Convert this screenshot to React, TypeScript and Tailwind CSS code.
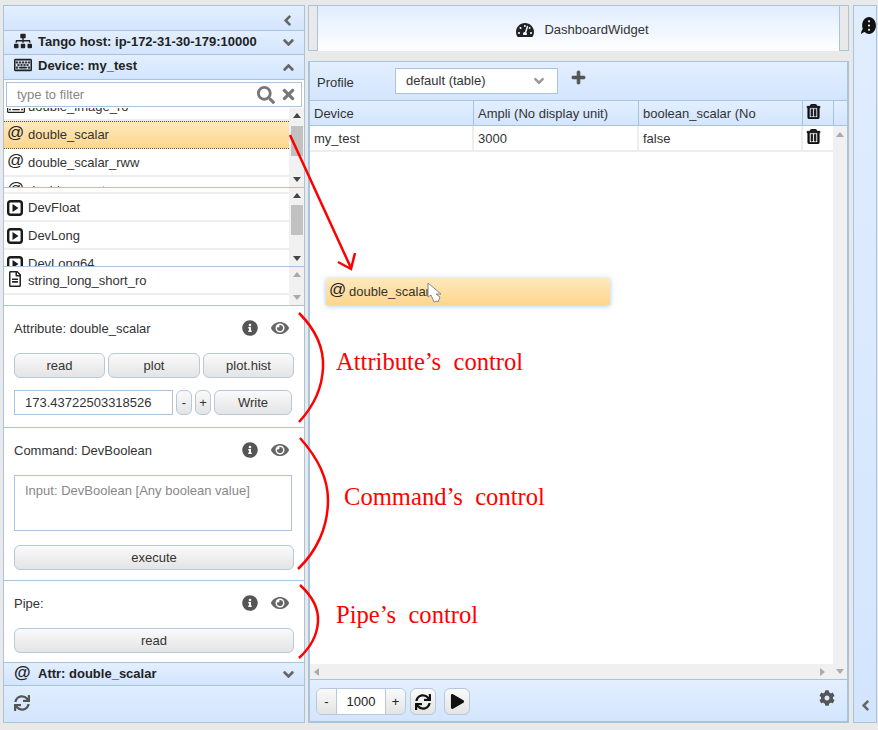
import React from "react";
import {
  FaSitemap, FaRegKeyboard, FaSearch, FaTimes, FaInfoCircle, FaEye, FaPlus, FaRegTrashAlt,
  FaSync, FaPlay, FaCog, FaTachometerAlt, FaAngleLeft, FaAngleDown, FaAngleUp,
  FaRegFileAlt, FaCommentDots,
} from "react-icons/fa";

const At = () => <span className="text-[17px] leading-none text-[#222] w-[21px] -mt-[5px] shrink-0">@</span>;

function Header({ icon, label, open, h }: { icon: React.ReactNode; label: string; open?: boolean; h: string }) {
  return (
    <div className={`flex items-center pl-[10px] pr-[7px] border-b border-[#a8c4dc] bg-gradient-to-b from-[#e3efff] to-[#d3e5fd] font-bold text-[13px] text-[#222] ${h}`}>
      <span className="w-[24px] shrink-0 flex items-center">{icon}</span>
      <span className="flex-1 -mt-[2px]">{label}</span>
      {open ? <FaAngleUp className="text-[#666] text-[17px]" /> : <FaAngleDown className="text-[#666] text-[17px]" />}
    </div>
  );
}

function Scroll({ thumbTop, thumbH, faded }: { thumbTop?: string; thumbH?: string; faded?: boolean }) {
  const c = faded ? "border-b-[#aaa] " : "border-b-[#444]";
  const d = faded ? "border-t-[#aaa]" : "border-t-[#444]";
  return (
    <div className="w-[15px] shrink-0 bg-[#f1f1f1] flex flex-col items-center justify-between relative py-[5px]">
      <div className={`w-0 h-0 border-x-[4px] border-x-transparent border-b-[5px] ${c}`} />
      {thumbH && <div className={`absolute left-[2px] right-[1px] bg-[#c1c1c1] ${thumbTop} ${thumbH}`} />}
      <div className={`w-0 h-0 border-x-[4px] border-x-transparent border-t-[5px] ${d}`} />
    </div>
  );
}

function Row({ icon, label, hl }: { icon: React.ReactNode; label: string; hl?: boolean }) {
  return (
    <div className={`h-[28px] shrink-0 flex items-center pl-[3px] text-[13px] text-[#333] ${hl ? "bg-gradient-to-b from-[#ffe9bd] to-[#fdd68d] border-y border-dotted border-y-[#555]" : "border-b-2 pt-[1px] border-[#eeeeee]"}`}>
      <span className="w-[21px] shrink-0 flex items-center">{icon}</span>
      <span>{label}</span>
    </div>
  );
}

function Btn({ children, className = "" }: { children: React.ReactNode; className?: string }) {
  return (
    <div className={`flex items-center justify-center h-[25px] rounded-[6px] border border-[#b4c9dc] bg-gradient-to-b from-[#fafafa] to-[#e4e4e4] text-[13px] text-[#333] ${className}`}>
      {children}
    </div>
  );
}

function Title({ label }: { label: string }) {
  return (
    <div className="flex items-center text-[13px] text-[#333] h-[20px]">
      <span className="flex-1">{label}</span>
      <FaInfoCircle className="text-[#555] text-[16px] mr-[13px] -mt-[3px]" />
      <FaEye className="text-[#666] text-[18px] mr-[6px] -mt-[3px]" />
    </div>
  );
}

const PlayIc = () => (
  <svg width="16" height="16" viewBox="0 0 16 16">
    <rect x="1.2" y="1.2" width="13.6" height="13.6" rx="2.5" fill="#fff" stroke="#1a1a1a" strokeWidth="2.4" />
    <path d="M5.5 4 L11.5 8 L5.5 12 Z" fill="#1a1a1a" />
  </svg>
);

const Trash = () => <FaRegTrashAlt className="text-[#111] text-[15px]" stroke="#111" strokeWidth={28} />;

export default function App() {
  return (
    <div className="relative w-[878px] h-[730px] bg-[#e9e9e9] overflow-hidden flex pt-[5px] pl-[3px] font-['Liberation_Sans',Arial,sans-serif]">
      {/* Left panel */}
      <div className="w-[302px] h-[718px] shrink-0 border border-[#a8c4dc] bg-white flex flex-col">
        <div className="h-[25px] shrink-0 border-b border-[#a8c4dc] bg-gradient-to-b from-[#e3efff] to-[#d3e5fd] flex items-center justify-end pr-[8px] pt-[5px]">
          <FaAngleLeft className="text-[#666] text-[17px]" />
        </div>
        <Header h="h-[24px] shrink-0" icon={<FaSitemap className="text-[#222] text-[18px] -mt-[4px]" />} label="Tango host: ip-172-31-30-179:10000" />
        <Header h="h-[25px] shrink-0" open icon={<FaRegKeyboard className="text-[#222] text-[18px] -mt-[4px]" stroke="#222" strokeWidth={16} />} label="Device: my_test" />

        <div className="h-[28px] shrink-0 px-[2px] pt-[2px] bg-white">
          <div className="h-[25px] border border-[#a8c4dc] flex items-center pl-[10px] pr-[4px] text-[13px] text-[#888]">
            <span className="flex-1">type to filter</span>
            <FaSearch className="text-[#777] text-[18px] mr-[5px]" />
            <FaTimes className="text-[#777] text-[17px]" />
          </div>
        </div>

        <div className="h-[80px] shrink-0 flex overflow-hidden border-b border-[#a8c4dc]">
          <div className="flex-1 flex flex-col -mt-[15px]">
            <Row icon={<FaRegKeyboard className="text-[18px] text-[#222]" />} label="double_image_ro" />
            <Row hl icon={<At />} label="double_scalar" />
            <Row icon={<At />} label="double_scalar_rww" />
            <Row icon={<At />} label="double_spectrum" />
          </div>
          <Scroll thumbTop="top-[18px]" thumbH="h-[30px]" />
        </div>

        <div className="h-[79px] shrink-0 flex overflow-hidden border-b border-[#a8c4dc]">
          <div className="flex-1 flex flex-col -mt-[22px]">
            <Row icon={<PlayIc />} label="DevDouble" />
            <Row icon={<PlayIc />} label="DevFloat" />
            <Row icon={<PlayIc />} label="DevLong" />
            <Row icon={<PlayIc />} label="DevLong64" />
          </div>
          <Scroll thumbTop="top-[17px]" thumbH="h-[30px]" />
        </div>

        <div className="h-[39px] shrink-0 flex overflow-hidden border-b border-[#a8c4dc]">
          <div className="flex-1 flex flex-col">
            <Row icon={<FaRegFileAlt className="text-[16px] text-[#222] -mt-[3px]" />} label="string_long_short_ro" />
          </div>
          <Scroll faded />
        </div>

        <div className="h-[122px] shrink-0 border-b border-[#a8c4dc] pl-[10px] pr-[9px] pt-[13px]">
          <Title label="Attribute: double_scalar" />
          <div className="flex gap-[3px] mt-[14px]">
            <Btn className="w-[91px]">read</Btn>
            <Btn className="w-[92px]">plot</Btn>
            <Btn className="w-[91px]">plot.hist</Btn>
          </div>
          <div className="flex mt-[12px]">
            <div className="w-[159px] h-[25px] border border-[#a8c4dc] flex items-center pl-[10px] text-[13px] text-[#333]">173.43722503318526</div>
            <Btn className="w-[16px] ml-[3px]">-</Btn>
            <Btn className="w-[16px] ml-[3px]">+</Btn>
            <Btn className="w-[78px] ml-[3px]">Write</Btn>
          </div>
        </div>

        <div className="h-[153px] shrink-0 border-b border-[#a8c4dc] pl-[10px] pr-[9px] pt-[13px]">
          <Title label="Command: DevBoolean" />
          <div className="w-[278px] h-[56px] mt-[14px] border border-[#a8c4dc] pl-[10px] pt-[5px] text-[13px] text-[#888]">Input: DevBoolean [Any boolean value]</div>
          <Btn className="mt-[14px] w-[280px]">execute</Btn>
        </div>

        <div className="h-[81px] shrink-0 pl-[10px] pr-[9px] pt-[13px]">
          <Title label="Pipe:" />
          <Btn className="mt-[14px] w-[280px]">read</Btn>
        </div>

        <Header h="h-[24px] shrink-0 border-t pt-[1px]" icon={<At />} label="Attr: double_scalar" />
        <div className="flex-1 bg-gradient-to-b from-[#e0edff] to-[#d3e5fd] pl-[10px] pt-[9px]">
          <FaSync className="text-[#555] text-[16px]" />
        </div>
      </div>

      {/* Center */}
      <div className="w-[541px] h-[718px] shrink-0 ml-[3px] flex flex-col border-b-2 border-[#a8c4dc]">
        <div className="h-[46px] shrink-0 flex">
          <div className="w-[10px] border border-[#a8c4dc] bg-[#e9e9e9]" />
          <div className="w-[521px] border-t border-[#a8c4dc] bg-gradient-to-b from-[#e0edff] to-white flex items-center justify-center gap-[10px] pl-[8px] pt-[2px] text-[13px] text-[#333]">
            <FaTachometerAlt className="text-[#222] text-[18px]" />
            <span>DashboardWidget</span>
          </div>
          <div className="flex-1 border border-[#a8c4dc] bg-[#e9e9e9]" />
        </div>
        <div className="flex-1 mt-[10px] border-x-2 border-t border-[#a8c4dc] flex flex-col min-h-0">
          <div className="h-[38px] shrink-0 flex bg-gradient-to-b from-[#e3efff] to-[#d3e5fd] pl-[7px] text-[13px] text-[#333]">
            <span className="w-[78px] pt-[11px]">Profile</span>
            <div className="w-[163px] h-[26px] mt-[6px] bg-white border border-[#a8c4dc] flex items-center pl-[10px] pr-[10px]">
              <span className="flex-1">default (table)</span>
              <FaAngleDown className="text-[#999] text-[16px]" />
            </div>
            <FaPlus className="ml-[13px] mt-[8px] text-[#555] text-[15px]" stroke="#555" strokeWidth={24} />
          </div>
          <div className="h-[26px] shrink-0 flex border-y border-[#a8c4dc] bg-gradient-to-b from-[#e3efff] to-[#d3e5fd] text-[13px] text-[#333]">
            <div className="w-[164px] border-r border-[#a8c4dc] pl-[4px] pt-[3px]">Device</div>
            <div className="w-[165px] border-r border-[#a8c4dc] pl-[4px] pt-[3px]">Ampli (No display unit)</div>
            <div className="w-[164px] border-r border-[#a8c4dc] pl-[4px] pt-[3px] overflow-hidden whitespace-nowrap">boolean_scalar (No</div>
            <div className="w-[31px] border-r border-[#a8c4dc] pl-[3px] pt-[3px]"><Trash /></div>
          </div>
          <div className="flex-1 flex min-h-0">
            <div className="flex-1 bg-white">
              <div className="h-[26px] flex border-b-2 border-[#eeeeee] text-[13px] text-[#333]">
                <div className="w-[164px] border-r-2 border-[#eeeeee] pl-[4px] pt-[3px]">my_test</div>
                <div className="w-[165px] border-r-2 border-[#eeeeee] pl-[4px] pt-[3px]">3000</div>
                <div className="w-[164px] border-r-2 border-[#eeeeee] pl-[4px] pt-[3px]">false</div>
                <div className="flex-1 pl-[3px] pt-[3px]"><Trash /></div>
              </div>
            </div>
            <div className="w-[14px] bg-[#f0f0f0] flex justify-center pt-[6px]">
              <div className="w-0 h-0 border-x-[4px] border-x-transparent border-b-[5px] border-b-[#aaa]" />
            </div>
          </div>
          <div className="h-[16px] shrink-0 bg-[#f0f0f0] border-b border-[#a8c4dc] flex items-center pl-[4px] pr-[3px]">
            <div className="w-0 h-0 border-y-[4px] border-y-transparent border-r-[5px] border-r-[#aaa]" />
            <div className="flex-1" />
            <div className="w-0 h-0 border-y-[4px] border-y-transparent border-l-[5px] border-l-[#aaa]" />
            <div className="w-0 h-0 ml-[11px] border-x-[4px] border-x-transparent border-t-[5px] border-t-[#aaa]" />
          </div>
          <div className="h-[41px] shrink-0 bg-gradient-to-b from-[#e3efff] to-[#d3e5fd] flex items-center pl-[6px] pr-[12px] pt-[2px] text-[13px] text-[#222]">
            <div className="flex h-[27px] w-[90px] rounded-[6px] border border-[#b4c9dc] overflow-hidden">
              <div className="w-[19px] flex items-center justify-center bg-gradient-to-b from-[#fafafa] to-[#e4e4e4]">-</div>
              <div className="flex-1 flex items-center justify-center bg-white border-x border-[#b4c9dc]">1000</div>
              <div className="w-[19px] flex items-center justify-center bg-gradient-to-b from-[#fafafa] to-[#e4e4e4]">+</div>
            </div>
            <div className="ml-[4px] w-[26px] h-[27px] rounded-[6px] border border-[#b4c9dc] bg-gradient-to-b from-[#fafafa] to-[#e4e4e4] flex items-center justify-center">
              <FaSync className="text-[#111] text-[16px]" />
            </div>
            <div className="ml-[8px] w-[26px] h-[27px] rounded-[6px] border border-[#b4c9dc] bg-gradient-to-b from-[#fafafa] to-[#e4e4e4] flex items-center justify-center">
              <FaPlay className="text-[#111] text-[15px]" />
            </div>
            <div className="flex-1" />
            <FaCog className="text-[#555] text-[16px] -mt-[8px]" />
          </div>
        </div>
      </div>

      {/* Right rail */}
      <div className="w-[24px] h-[718px] shrink-0 ml-[4px] border border-[#a8c4dc] bg-gradient-to-b from-[#e0edff] to-[#d3e5fd] flex flex-col items-center justify-between pt-[11px] pb-[8px]">
        <FaCommentDots className="text-[#111] text-[17px] ml-[7px] rotate-90 -scale-x-100" />
        <FaAngleLeft className="text-[#666] text-[17px]" />
      </div>

      {/* Dragged item */}
      <div className="absolute left-[326px] top-[278px] w-[284px] h-[27px] flex items-center pl-[3px] text-[13px] text-[#333] bg-gradient-to-b from-[#ffe9bd] to-[#fdd68d] shadow-[0_1px_5px_rgba(120,160,210,0.6)]">
        <span className="text-[17px] leading-none text-[#222] w-[20px] -mt-[5px]">@</span>
        <span>double_scalar</span>
      </div>
      <svg className="absolute left-[426px] top-[282px]" width="18" height="23" viewBox="0 0 18 23">
        <path d="M2 1 L2 15 L5 13 L8 20 L11 19 L12 20 L14 15 L10 12 L15 12 Z" fill="#fff" stroke="#888" strokeWidth="1" />
      </svg>

      {/* Annotations */}
      <svg className="absolute left-0 top-0 pointer-events-none" width="878" height="730" viewBox="0 0 878 730" fill="none" stroke="#ff0000" strokeWidth="2.5">
        <path d="M290 135 L351 268" />
        <path d="M338 262 L351 269 L355 253" />
        <path d="M299 313 C318 332 324 350 323 368 C322 390 312 408 299 422" />
        <path d="M300 438 C318 458 328 478 328 500 C328 528 316 552 298 569" />
        <path d="M300 585 C312 596 319 608 318 622 C317 636 310 648 299 658" />
      </svg>
      <div className="absolute left-[336px] top-[347px] text-[24.6px] leading-[30px] text-[#ff0000] whitespace-pre font-['Liberation_Serif',serif]">Attribute’s  control</div>
      <div className="absolute left-[344px] top-[482px] text-[24.6px] leading-[30px] text-[#ff0000] whitespace-pre font-['Liberation_Serif',serif]">Command’s  control</div>
      <div className="absolute left-[336px] top-[600px] text-[24.6px] leading-[30px] text-[#ff0000] whitespace-pre font-['Liberation_Serif',serif]">Pipe’s  control</div>
    </div>
  );
}
